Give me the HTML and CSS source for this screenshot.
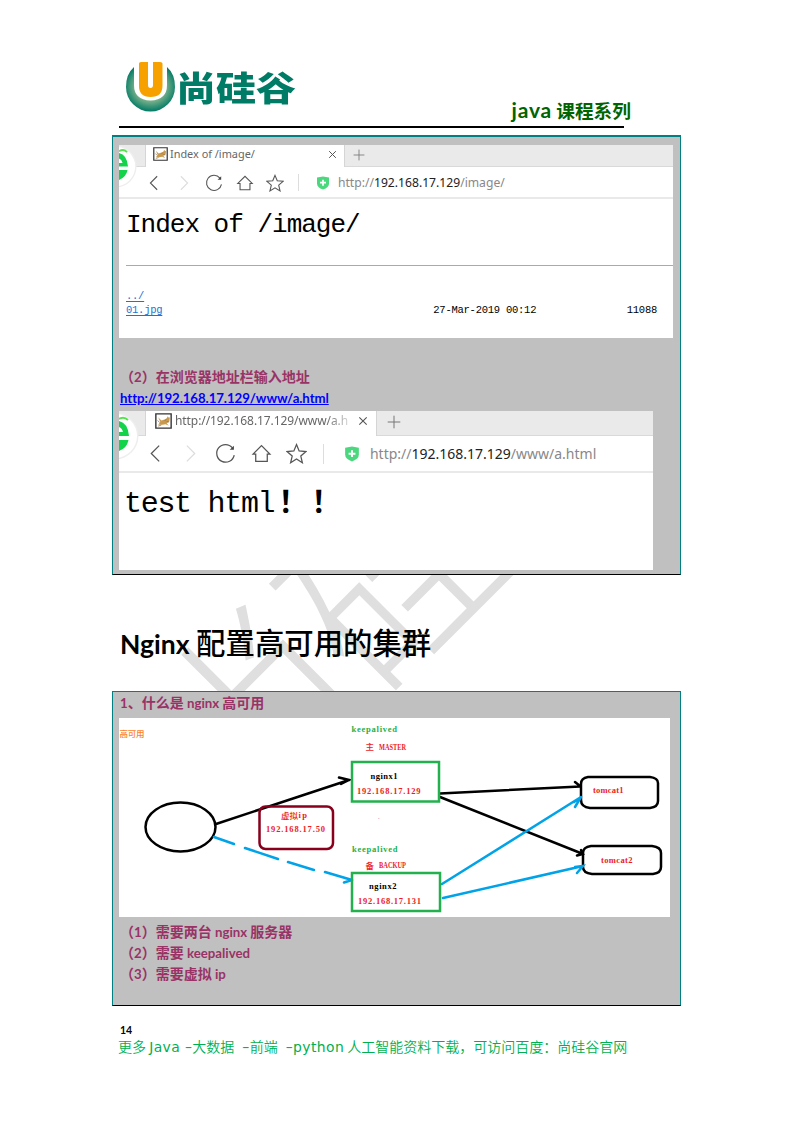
FILE: index.html
```
<!DOCTYPE html>
<html lang="zh-CN">
<head>
<meta charset="utf-8">
<title>Nginx 配置高可用的集群</title>
<link rel="stylesheet" href="styles.css">
</head>
<body>
<svg class="symbols" aria-hidden="true">
  <symbol id="back" viewBox="0 0 20 20"><path d="M13.5 2.5 6 10l7.500 7.500"/></symbol>
  <symbol id="forward" viewBox="0 0 20 20"><path d="M6.500 2.500 14 10l-7.500 7.500"/></symbol>
  <symbol id="reload" viewBox="0 0 20 20"><path d="M16.600 4.600A8.400 8.400 0 1 0 18.300 11.500"/><path d="M18 2.500v4h-4z" fill="#444" stroke="none"/></symbol>
  <symbol id="home" viewBox="0 0 20 20"><path d="M4.500 10.500H2L10 2.500l8 8h-2.500v7h-11z"/></symbol>
  <symbol id="star" viewBox="0 0 20 20"><path d="m10 1.500 2.500 6 6.500.6-4.900 4.300 1.500 6.400L10 15.300l-5.600 3.500 1.500-6.400L1 8.100l6.500-.6z"/></symbol>
  <symbol id="shield" viewBox="0 0 14 14"><path d="M1 1.500 7 .5l6 1v6q0 4-6 6-6-2-6-6z" fill="#4bd77d" stroke="none"/><path d="M7 3.700v6M4 6.700h6" stroke="#fff" stroke-width="1.700"/></symbol>
  <symbol id="cross" viewBox="0 0 10 10"><path d="m1.300 1.300 7.400 7.400m0-7.400L1.300 8.700"/></symbol>
  <symbol id="plus" viewBox="0 0 14 14"><path d="M7 .7v12.600M.7 7h12.600"/></symbol>
  <symbol id="cat" viewBox="0 0 16 15"><path d="M.8.800h14.400v13.400H.8z" fill="#fff" stroke="#333" stroke-width="1.300"/><path d="m3 4 3 3 3-1 2-1 1-2 1 1.500 1-.5-.5 4-2.500 1.500 2 2.500-3-1.500-3 .5L3 11l2-2.500z" fill="#c99a4e" stroke="none"/><path d="m2.500 7 2 2m6-3-1.500 1.500m4 1-2-.5M3 12.300l3-1" stroke="#857050" stroke-width=".7"/></symbol>
  <symbol id="ebrowser" viewBox="0 0 40 60"><circle cx="-4" cy="25" r="23.500" fill="#eee"/><circle cx="-4" cy="25" r="22" fill="#fff"/><path d="M0 10q9 2 10 15H0v-4h4q-1-4-4-5zM0 29h9.500Q8 37 0 40z" fill="#12d34a"/><path d="M0 8q5-3 9 1" fill="none" stroke="#54e54c" stroke-width="2"/></symbol>
</svg>

<div class="page">
  <div class="watermark">尚硅谷</div>
  <header class="header">
    <div class="brand">
      <svg class="brand-mark" viewBox="0 0 52 52">
        <defs><radialGradient id="ring" cx=".5" cy=".45" r=".55"><stop offset=".5" stop-color="#8cba91"/><stop offset="1" stop-color="#007a65"/></radialGradient></defs>
        <path d="M9 7Q1 14 1 27A24.500 24.500 0 0 0 50 27Q50 14 42 7v18q0 15-16.500 15.500Q9 40 9 25z" fill="url(#ring)"/>
        <path d="M14 3.500q0-1.500 2-1.500h7V25q0 3 2.500 3t2.500-3V2h7q2.500 0 2.500 1.500v22q0 11.500-12 11.500T14 25z" fill="#f7a100"/>
      </svg>
      <span class="brand-name">尚硅谷</span>
    </div>
    <div class="course"><span class="course-java">java</span> 课程系列</div>
  </header>

  <section class="box box-pages">
    <div class="shot shot-index">
      <svg class="e-logo"><use href="#ebrowser"/></svg>
      <div class="tabs">
        <div class="tab"><svg class="fav"><use href="#cat"/></svg><span class="tab-title">Index of /image/</span><svg class="close"><use href="#cross"/></svg></div>
        <svg class="new"><use href="#plus"/></svg>
      </div>
      <div class="bar">
        <svg class="ico"><use href="#back"/></svg><svg class="ico faint"><use href="#forward"/></svg><svg class="ico"><use href="#reload"/></svg><svg class="ico"><use href="#home"/></svg><svg class="ico"><use href="#star"/></svg>
        <i class="sep"></i><svg class="shield"><use href="#shield"/></svg>
        <span class="url">http://<b>192.168.17.129</b>/image/</span>
      </div>
      <h1 class="index-title">Index of /image/</h1>
      <div class="listing">
        <div><a>../</a></div>
        <div class="file"><a>01.jpg</a><span class="date">27-Mar-2019 00:12</span><span class="size">11088</span></div>
      </div>
    </div>
    <p class="line step"><span class="cjk">（</span>2<span class="cjk">）在浏览器地址栏输入地址</span></p>
    <p class="line"><a class="link">http://192.168.17.129/www/a.html</a></p>
    <div class="shot shot-test">
      <svg class="e-logo"><use href="#ebrowser"/></svg>
      <div class="tabs">
        <div class="tab"><svg class="fav"><use href="#cat"/></svg><span class="tab-title fade">http://192.168.17.129/www/a.h</span><svg class="close"><use href="#cross"/></svg></div>
        <svg class="new"><use href="#plus"/></svg>
      </div>
      <div class="bar">
        <svg class="ico"><use href="#back"/></svg><svg class="ico faint"><use href="#forward"/></svg><svg class="ico"><use href="#reload"/></svg><svg class="ico"><use href="#home"/></svg><svg class="ico"><use href="#star"/></svg>
        <i class="sep"></i><svg class="shield"><use href="#shield"/></svg>
        <span class="url">http://<b>192.168.17.129</b>/www/a.html</span>
      </div>
      <p class="test-text">test html<span class="bang">！！</span></p>
    </div>
  </section>

  <h2 class="title"><span class="latin">Nginx</span> 配置高可用的集群</h2>

  <section class="box box-cluster">
    <p class="line">1<span class="cjk">、什么是</span> nginx <span class="cjk">高可用</span></p>
    <svg class="diagram" viewBox="119 718 551 199">
      <g fill="none" stroke-width="2.500" stroke-linecap="round">
        <g stroke="#000">
          <ellipse cx="180.500" cy="827" rx="35" ry="24.500"/>
          <path d="M216 824 349 780M339 777.500l10 2.500-8 4M440 793.500l140-7M575 782l5 4M440 797l143 57M577 855.500l6-1.500-2-4"/>
          <path d="M588 777h62q8 1 8 6v18q0 6-8 7h-60q-9-1-9-8v-16q0-6 7-7zM591 846h61q9 1 9 7v14q0 6-8 7h-61q-9-1-9-7v-14q0-6 8-7z"/>
        </g>
        <g stroke="#00a2e8">
          <path d="m214 837 20 7M245 848l33 11M288 862l26 8M325 872l27 8M344 882.500l8-2.500M442 884l139-87M575 807l6-10-7 5M443 898l140-32M577 873l6-7-8 1"/>
        </g>
        <rect x="259.500" y="806.500" width="73.500" height="42.500" rx="6" stroke="#88001b"/>
        <g stroke="#22b14c" stroke-linecap="butt"><rect x="352" y="762" width="87" height="39.500"/><rect x="352" y="873" width="88" height="38"/></g>
      </g>
      <g class="nodes">
        <text class="orange han" x="119.500" y="737" textLength="25">高可用</text>
        <text class="green" x="351.500" y="731.500" textLength="45.500">keepalived</text>
        <text class="red han" x="365.500" y="750" textLength="8.500">主</text><text class="red caps" x="379" y="750" textLength="27" lengthAdjust="spacingAndGlyphs">MASTER</text>
        <text x="370.500" y="779" textLength="27">nginx1</text>
        <text class="red" x="357" y="794" textLength="63.500">192.168.17.129</text>
        <text class="red han" x="281" y="818.500" textLength="17">虚拟</text><text class="red" x="298.500" y="818" textLength="8.500">ip</text>
        <text class="red" x="266" y="832" textLength="59">192.168.17.50</text>
        <text class="green" x="352" y="851.500" textLength="45.500">keepalived</text>
        <text class="red han" x="365.500" y="868.500" textLength="9">备</text><text class="red caps" x="379" y="868" textLength="27" lengthAdjust="spacingAndGlyphs">BACKUP</text>
        <text x="369" y="888.500" textLength="27.500">nginx2</text>
        <text class="red" x="358" y="903.500" textLength="63">192.168.17.131</text>
        <text class="red" x="593" y="793" textLength="30.500">tomcat1</text>
        <text class="red" x="601" y="863" textLength="31.500">tomcat2</text>
      </g>
      <path d="M378 818.500h1.500" stroke="#e9b9bb" stroke-width=".8"/>
    </svg>
    <p class="line step"><span class="cjk">（</span>1<span class="cjk">）需要两台</span> nginx <span class="cjk">服务器</span></p>
    <p class="line step"><span class="cjk">（</span>2<span class="cjk">）需要</span> keepalived</p>
    <p class="line step"><span class="cjk">（</span>3<span class="cjk">）需要虚拟</span> ip</p>
  </section>

  <footer class="footer">
    <div class="page-no">14</div>
    <div class="more">更多 <span class="v">Java –</span>大数据 <span class="v">&nbsp;–</span>前端 <span class="v">&nbsp;–python</span> 人工智能资料下载，可访问百度：尚硅谷官网</div>
  </footer>
</div>
</body>
</html>
```
FILE: styles.css
```
* { box-sizing: border-box; }
body { margin: 0; background: #fff; }
p, h1, h2 { margin: 0; }
.symbols { display: none; }
svg { display: block; flex: none; }

.page { position: relative; width: 793px; height: 1122px; padding: 60px 112px 0; overflow: hidden; isolation: isolate; }
.watermark {
  position: absolute; z-index: -1; left: 80px; top: 462px; width: 620px; height: 200px;
  font: 300 205px/200px "Noto Sans CJK SC", sans-serif; letter-spacing: -8px; color: #dfdfdf; white-space: nowrap; transform: rotate(-45deg);
}

/* Header */
.header { display: flex; justify-content: space-between; height: 68px; margin: 0 56px 0 7px; border-bottom: 2px solid #000; width: 505px; }
.brand { display: flex; padding-left: 6px; }
.brand-mark { width: 52px; height: 52px; }
.brand-name { font: 900 40px/52px "Noto Sans CJK SC", sans-serif; color: #007b66; transform: scaleY(.85); white-space: nowrap; margin: -1px 0 0 -1px; }
.course { font: bold 18.700px/24px "Noto Sans CJK SC", sans-serif; color: #006400; white-space: nowrap; margin: 38px -7px 0 0; }
.course-java { font-family: Lato, sans-serif; font-size: 21px; letter-spacing: .8px; }

/* Shaded boxes */
.box { width: 569px; background: #c0c0c0; border: 1px solid #008080; border-bottom-color: #000; padding: 0 6px; }
.box-pages { margin-top: 7px; height: 440px; border-top-width: 2px; padding-top: 8px; }
.box-cluster { height: 315px; padding-top: 1px; }
.line { height: 21px; padding-left: 1px; font: bold 13.250px/21px Lato, "Noto Sans CJK SC", sans-serif; color: #993366; white-space: nowrap; }
.cjk { font-family: "Noto Sans CJK SC", sans-serif; font-size: 14px; line-height: 1; }
.link { color: #0000ff; text-decoration: underline; letter-spacing: -.08px; }

/* Browser captures */
.shot { position: relative; overflow: hidden; background: #fff; }
.e-logo { position: absolute; left: 0; top: 0; width: 40px; height: 60px; }
.tabs { display: flex; background: #eaeaea; border-bottom: 1px solid #d9d9d9; }
.tab { display: flex; align-items: center; background: #fff; border: solid #d5d5d5; border-width: 0 1px; margin-bottom: -1px; padding: 0 0 4px 7px; margin-left: 26px; }
.tab-title { font-family: "Noto Sans", sans-serif; color: #666; white-space: nowrap; margin-top: -1px; }
.fade { -webkit-mask-image: linear-gradient(90deg, #000 87%, transparent 105%); mask-image: linear-gradient(90deg, #000 87%, transparent 105%); }
.close, .new, .ico { fill: none; stroke: #555; }
.close { margin-left: auto; stroke-width: 1.100; }
.new { stroke: #777; align-self: center; }
.bar { display: flex; align-items: center; border-bottom: 2px solid #e9e9e9; }
.ico { stroke-width: 1.200; }
.faint { stroke: #ddd; }
.sep { width: 1px; background: #ddd; }
.url { font-family: "Noto Sans", sans-serif; color: #888; white-space: nowrap; }
.url b { font-weight: 400; color: #222; }

.shot-index { width: 554px; height: 193px; margin-bottom: 29px; }
.shot-index .e-logo { top: -1px; width: 36px; height: 54px; }
.shot-index .tabs { height: 22px; }
.shot-index .tab { width: 200px; }
.shot-index .fav { width: 15px; height: 14px; }
.shot-index .tab-title { font-size: 10.900px; margin-left: 2px; }
.shot-index .close { width: 9px; height: 9px; margin-right: 7px; }
.shot-index .new { width: 12px; height: 12px; margin: -2px 0 0 8px; }
.shot-index .bar { height: 32px; padding: 1px 0 0 26px; }
.shot-index .ico { width: 18px; height: 18px; margin-right: 12.200px; }
.shot-index .sep { height: 17px; margin-left: 2px; }
.shot-index .shield { width: 14px; height: 14px; margin-left: 17px; }
.shot-index .url { font-size: 12.150px; margin-left: 8px; }
.index-title { font: 400 26px/52px "Liberation Mono", monospace; letter-spacing: -1px; margin-left: 7px; height: 67px; border-bottom: 1px solid #aaa; white-space: nowrap; }
.listing { padding: 23px 16px 0 7px; font: 10.500px/14px "Liberation Mono", monospace; letter-spacing: -.25px; }
.listing a { color: #1a74d2; text-decoration: underline; text-underline-offset: 2px; }
.file { display: flex; }
.date { margin-left: 271px; }
.size { margin-left: auto; }

.shot-test { width: 534px; height: 159px; margin-top: 2px; }
.shot-test .tabs { height: 25px; }
.shot-test .tab { width: 232px; padding: 0 0 5px 9px; }
.shot-test .fav { width: 17px; height: 16px; }
.shot-test .tab-title { font-size: 12px; margin-left: 3px; letter-spacing: -.08px; }
.shot-test .close { width: 10px; height: 10px; margin-right: 8px; }
.shot-test .new { width: 14px; height: 14px; margin: -3px 0 0 10px; }
.shot-test .bar { height: 37px; padding-left: 26px; }
.shot-test .ico { width: 21px; height: 21px; margin-right: 14.200px; }
.shot-test .sep { height: 20px; margin-left: 2px; }
.shot-test .shield { width: 16px; height: 16px; margin-left: 20px; }
.shot-test .url { font-size: 14px; margin-left: 10px; }
.test-text { font: 30px/62px "Liberation Mono", "Noto Sans CJK SC", monospace; letter-spacing: -1.300px; padding-left: 5px; white-space: nowrap; }
.bang { font: bold 30px/1 "Noto Sans CJK SC", sans-serif; letter-spacing: 3px; margin-left: 4px; }

.title { height: 116px; padding: 46px 0 0 8px; font: 500 29.400px/40px "Noto Sans CJK SC", sans-serif; color: #000; white-space: nowrap; }
.latin { font-family: Lato, sans-serif; font-weight: bold; font-size: 26.500px; letter-spacing: 0; }

.diagram { width: 551px; height: 199px; margin: 4px 0 5px; background: #fff; }
.nodes text { font: bold 8.500px "Liberation Serif", serif; }
.nodes .caps { font-size: 8px; }
.nodes .han { font: 500 8.500px "Noto Sans CJK SC", sans-serif; }
.green { fill: #22b14c; }
.red { fill: #ed1c24; }
.orange { fill: #ff7f27; }

.footer { padding: 17px 0 0 7px; }
.page-no { font: bold 10.500px/14px Lato, sans-serif; padding-left: 1px; }
.more { font: 350 14px/18px "Noto Sans CJK SC", sans-serif; color: #00b050; white-space: nowrap; margin-left: -1px; }
.v { font-family: "DejaVu Sans", sans-serif; font-weight: 400; font-size: 13.900px; letter-spacing: .42px; }
```
